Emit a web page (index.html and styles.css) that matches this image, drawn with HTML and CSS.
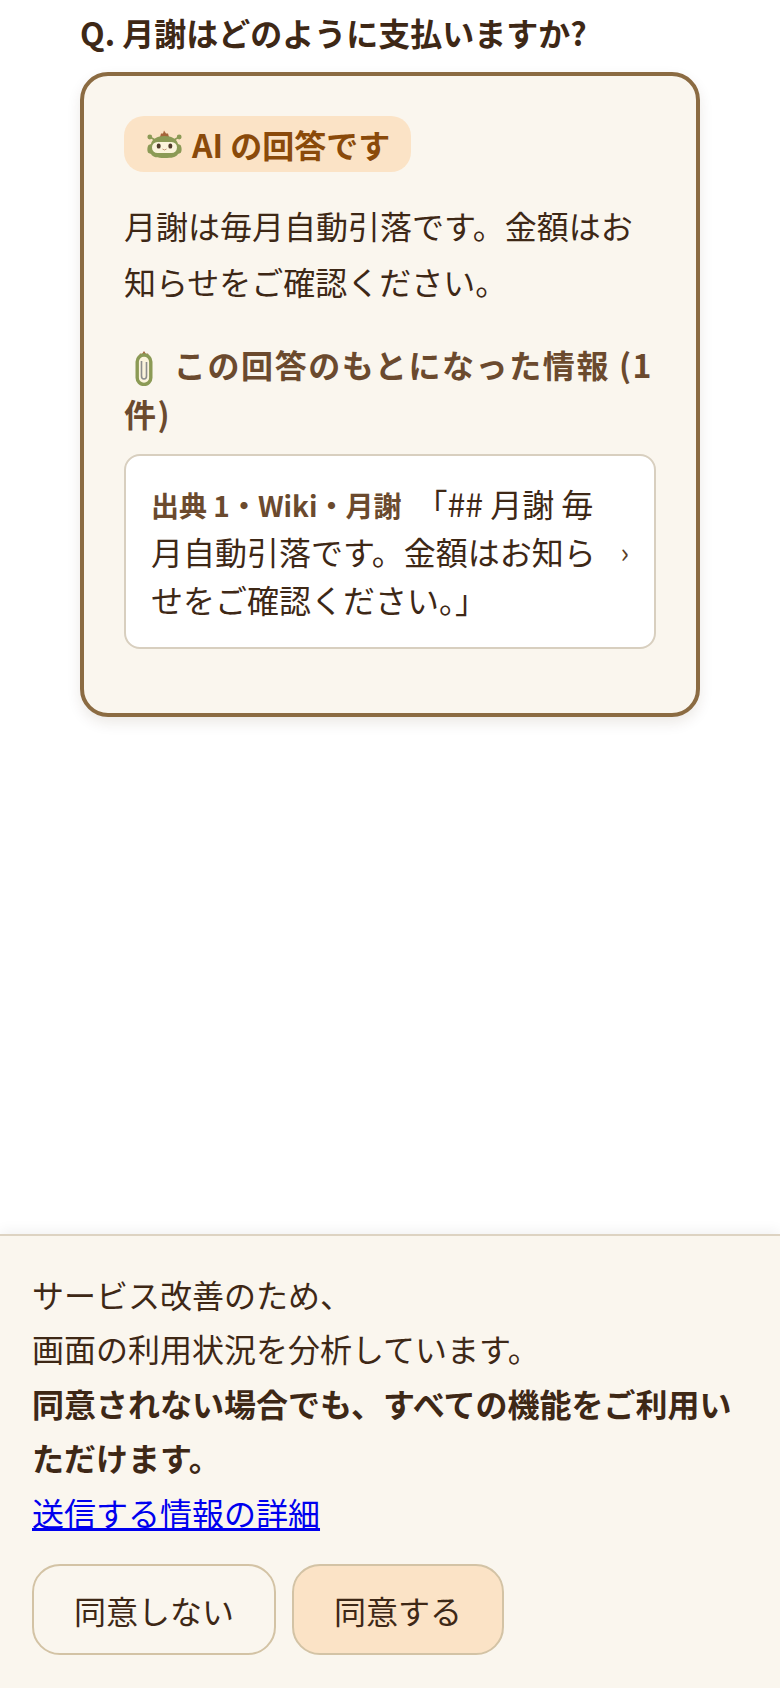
FILE: index.html
```html
<!DOCTYPE html>
<html lang="ja">
<head>
  <meta charset="UTF-8" />
  <meta name="viewport" content="width=device-width, initial-scale=1" />
  <title>AI の回答</title>
  <link rel="stylesheet" href="styles.css">
</head>
<body>
  <div class="container">
    <p class="question">Q. 月謝はどのように支払いますか?</p>

    <div class="answer-card">
      <div class="ai-badge">
        <svg class="robot-icon" viewBox="0 0 35 28" aria-hidden="true">
          <path d="M13 7 L14 3.5 L16 3.5 L17 0.5 L19 3.5 L21 3.5 L22 7 Z" fill="#a5653a" />
          <path d="M8 10 L3 7 M27 10 L32 7" stroke="#8b9a55" stroke-width="1.6" />
          <circle cx="2.8" cy="7" r="2.4" fill="#8b9a55" />
          <circle cx="32.2" cy="7" r="2.4" fill="#8b9a55" />
          <path d="M4 14 C5 9 10 6 17.5 6 C25 6 30 9 31 14 L33.5 15 C35 17 35 22 33.5 23 L31 24 C29 27.5 25 28 17.5 28 C10 28 6 27.5 4 24 L1.5 23 C0 22 0 17 1.5 15 Z" fill="#8b9a55" />
          <rect x="5" y="12" width="25" height="11" rx="5.5" fill="#fbf4dc" />
          <rect x="9.8" y="13.6" width="3.8" height="5" rx="1.9" fill="#4f3a2a" />
          <rect x="21.4" y="13.6" width="3.8" height="5" rx="1.9" fill="#4f3a2a" />
          <path d="M15.5 19 Q17.5 21 19.5 19" stroke="#c49a78" stroke-width="1" fill="none" />
        </svg>
        <span>AI の回答です</span>
      </div>

      <p class="answer-text">月謝は毎月自動引落です。金額はお知らせをご確認ください。</p>

      <h3 class="sources-title">
        <svg class="clip-icon" viewBox="0 0 18 36" aria-hidden="true">
          <path d="M4 6 L5 3.5 L7 4 L9 1 L11 4 L13 3.5 L14 6 Z" fill="#a5653a" />
          <rect x="2.2" y="5" width="13.6" height="29.5" rx="6.8" fill="#fbf4dc" stroke="#8b9a55" stroke-width="3.4" />
          <path d="M6.5 11 V26 C6.5 30 11.5 30 11.5 26 V12" fill="none" stroke="#8d8d8d" stroke-width="1.6" />
        </svg>
        この回答のもとになった情報 (1 件)
      </h3>

      <a class="source-item" href="#">
        <span class="source-body"><strong class="source-label">出典 1・Wiki・月謝</strong>「## 月謝 毎月自動引落です。金額はお知らせをご確認ください。」</span>
        <span class="source-arrow">›</span>
      </a>
    </div>
  </div>

  <div class="consent-banner">
    <p class="consent-text">
      サービス改善のため、<br>
      画面の利用状況を分析しています。<br>
      <strong>同意されない場合でも、すべての機能をご利用いただけます。</strong><br>
      <a href="#">送信する情報の詳細</a>
    </p>
    <div class="consent-buttons">
      <button class="consent-btn">同意しない</button>
      <button class="consent-btn accept">同意する</button>
    </div>
  </div>
</body>
</html>
```

FILE: styles.css
```css
body {
  margin: 0;
  font-family: "Noto Sans CJK JP", "Noto Sans", sans-serif;
  background: #fff;
  color: #3e2816;
  height: 1688px;
  overflow: hidden;
  position: relative;
}

.container {
  width: 620px;
  margin: 0 auto;
  padding-top: 4px;
}

.question {
  margin: 0 0 12px;
  font-size: 32px;
  font-weight: 700;
  line-height: 56px;
}

.answer-card {
  box-sizing: border-box;
  height: 645px;
  padding: 40px;
  background: #faf6ee;
  border: 4px solid #8b6b42;
  border-radius: 28px;
  box-shadow: 0 6px 14px rgba(70, 40, 10, 0.1);
}

.ai-badge {
  display: inline-flex;
  align-items: center;
  gap: 10px;
  height: 56px;
  padding: 0 21px 0 23px;
  background: #fbe3c6;
  border-radius: 20px;
  font-size: 32px;
  font-weight: 700;
  color: #8a4a0a;
}

.robot-icon {
  width: 35px;
  height: 28px;
}

.answer-text {
  margin: 25px 0 0;
  font-size: 32px;
  line-height: 56px;
}

.sources-title {
  margin: 31px 0 16px;
  font-size: 32px;
  font-weight: 700;
  letter-spacing: 0.05em;
  line-height: 49px;
  color: #6b4a2e;
}

.clip-icon {
  width: 18px;
  height: 36px;
  margin: 0 12px 0 11px;
  vertical-align: -8px;
}

.source-item {
  box-sizing: border-box;
  display: flex;
  align-items: center;
  gap: 16px;
  padding: 23px 25px 24px;
  background: #fff;
  border: 2px solid #d8cfbf;
  border-radius: 16px;
  color: #3e2816;
  text-decoration: none;
}

.source-body {
  flex: 1;
  font-size: 32px;
  line-height: 48px;
}

.source-label {
  margin-right: 14px;
  font-size: 28px;
  line-height: 1;
  color: #6b4a2e;
}

.source-arrow {
  font-size: 28px;
  color: #5a3d28;
}

.consent-banner {
  position: absolute;
  left: 0;
  right: 0;
  bottom: 0;
  box-sizing: border-box;
  height: 454px;
  padding: 31px 32px 0;
  background: #faf6ee;
  border-top: 2px solid #ddd3c2;
  box-shadow: 0 -4px 12px rgba(0, 0, 0, 0.05);
}

.consent-text {
  margin: 0;
  font-size: 32px;
  line-height: 54.4px;
}

.consent-text a {
  color: #0000ee;
}

.consent-buttons {
  display: flex;
  gap: 16px;
  margin-top: 25px;
}

.consent-btn {
  height: 91px;
  padding: 0 40px;
  background: #faf6ee;
  border: 2px solid #d3c3a5;
  border-radius: 28px;
  font-family: inherit;
  font-size: 32px;
  color: #3e2816;
}

.consent-btn.accept {
  background: #fbe3c6;
}
```
